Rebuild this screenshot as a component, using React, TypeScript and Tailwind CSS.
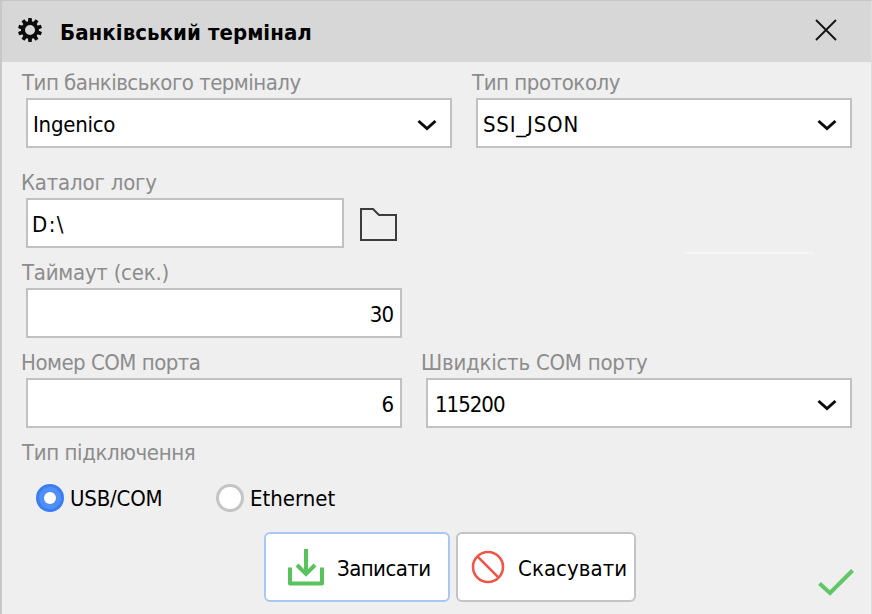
import React from "react";

type FieldProps = {
  label: string;
  value: string;
  labelClass: string;
  valueClass: string;
  boxClass: string;
  select?: boolean;
  numeric?: boolean;
};

function Chevron() {
  return (
    <svg className="mt-1.5 mr-[13px] shrink-0" width="20" height="14" viewBox="0 0 20 14" fill="none">
      <path d="M1.5 2 L10 9.5 L18.5 2" stroke="#0c0c0c" strokeWidth="3" />
    </svg>
  );
}

function Field({ label, value, labelClass, valueClass, boxClass, select, numeric }: FieldProps) {
  return (
    <div>
      <div className={`h-9 whitespace-nowrap pt-[3px] leading-9 text-[#8c8c8c] ${labelClass}`}>{label}</div>
      <div
        className={`ml-1 flex h-[50px] items-center border-2 border-[#c1c1c1] bg-white ${
          numeric ? "justify-end" : "justify-between"
        } ${boxClass}`}
      >
        <span className={`whitespace-nowrap pt-1 ${valueClass}`}>{value}</span>
        {select && <Chevron />}
      </div>
    </div>
  );
}

function Radio({ label, checked, labelClass }: { label: string; checked?: boolean; labelClass: string }) {
  return (
    <div className="flex w-[180px] items-center">
      <span
        className={`flex h-7 w-7 shrink-0 items-center justify-center rounded-full border-[3px] ${
          checked ? "border-[#3b7df5] bg-[#5090f5]" : "border-[#c4c4c4] bg-white"
        }`}
      >
        {checked && <span className="h-3 w-3 rounded-full bg-white" />}
      </span>
      <span className={`ml-[6px] whitespace-nowrap pt-px ${labelClass}`}>{label}</span>
    </div>
  );
}

export default function App() {
  return (
    <div className="flex h-[614px] w-[872px] flex-col overflow-hidden border-l-2 border-r border-t border-l-[#c8c8c8] border-r-[#dedede] border-t-[#c6c6c6] bg-[#efefef] font-['DejaVu_Sans_Condensed','DejaVu_Sans',sans-serif] text-[22px] leading-[26px] text-black">
      <header className="flex h-[61px] shrink-0 items-center bg-[#d7d7d7]">
        <svg className="mb-[3px] ml-4 shrink-0" width="24" height="24" viewBox="-12 -12 24 24">
          <circle r="7" fill="none" stroke="#0b0b0b" strokeWidth="4" />
          {[0, 36, 72, 108, 144, 180, 216, 252, 288, 324].map((a) => (
            <path key={a} d="M-2 -8 L-1.7 -12 L1.7 -12 L2 -8 Z" fill="#0b0b0b" transform={`rotate(${a})`} />
          ))}
        </svg>
        <h1 className="ml-[18px] whitespace-nowrap pt-0.5 font-bold tracking-[0.06px]">Банківський термінал</h1>
        <svg className="mb-[3px] ml-auto mr-[34px]" width="22" height="22" viewBox="0 0 22 22">
          <path d="M1 1 L21 21 M21 1 L1 21" stroke="#151515" strokeWidth="1.9" />
        </svg>
      </header>

      <main className="pl-5">
        <div className="flex gap-5">
          <Field label="Тип банківського терміналу" value="Ingenico" select labelClass="tracking-[-0.52px]" valueClass="pl-[5px] tracking-[-0.25px]" boxClass="w-[426px]" />
          <Field label="Тип протоколу" value="SSI_JSON" select labelClass="tracking-[-0.45px]" valueClass="pl-[5px] tracking-[0.8px]" boxClass="w-[376px]" />
        </div>
        <div className="mt-[14px] flex items-end">
          <Field label="Каталог логу" value={"D:\\"} labelClass="-ml-px tracking-[-0.2px]" valueClass="pl-1 tracking-[1.4px]" boxClass="w-[318px]" />
          <svg className="mb-[6px] ml-4" width="38" height="34" viewBox="0 0 38 34" fill="none">
            <path d="M1 1 H13 L19 7 H36 V32 H1 Z" stroke="#3d3d3d" strokeWidth="2" />
          </svg>
        </div>
        <div className="flex">
          <div className="mt-1">
            <Field label="Таймаут (сек.)" value="30" numeric labelClass="tracking-[-0.25px]" valueClass="pr-[7px] tracking-[-1px]" boxClass="w-[376px]" />
          </div>
          <div className="ml-[283px] mt-1 h-[2px] w-[129px] bg-[#f5f5f5]" />
        </div>
        <div className="mt-1 flex gap-5">
          <Field label="Номер COM порта" value="6" numeric labelClass="-ml-px tracking-[-0.5px]" valueClass="pr-[7px] tracking-[-1px]" boxClass="w-[376px]" />
          <Field label="Швидкість COM порту" value="115200" select labelClass="-ml-px tracking-[-0.23px]" valueClass="pl-[7px] tracking-[-1px]" boxClass="w-[426px]" />
        </div>
        <div className="mt-1 h-9 whitespace-nowrap pt-[3px] leading-9 tracking-[-0.4px] text-[#8c8c8c]">Тип підключення</div>
        <div className="flex h-[60px] items-center pl-[14px]">
          <Radio label="USB/COM" checked labelClass="tracking-[-0.2px]" />
          <Radio label="Ethernet" labelClass="tracking-[0px]" />
        </div>
      </main>

      <footer className="mt-1 flex items-start pl-[262px]">
        <button className="flex h-[70px] w-[186px] items-center rounded-[6px] border-2 border-[#a6c8f2] bg-white">
          <svg className="ml-[22px] mt-[1px] shrink-0" width="36" height="37" viewBox="0 0 36 37" fill="none" stroke="#58c25c" strokeWidth="4">
            <path d="M2 18.500 V34.500 H34 V18.500" strokeLinejoin="round" />
            <path d="M18 0 V25 M9 16 L18 25 L27 16" />
          </svg>
          <span className="ml-[13px] whitespace-nowrap pt-1 tracking-[-0.55px]">Записати</span>
        </button>
        <button className="ml-[6px] flex h-[70px] w-[180px] items-center rounded-[6px] border-2 border-[#c4c4c4] bg-white">
          <svg className="ml-[13px] shrink-0" width="34" height="34" viewBox="0 0 34 34" fill="none" stroke="#f05548" strokeWidth="2.6">
            <circle cx="17" cy="17" r="15" />
            <path d="M6.400 6.400 L27.600 27.600" />
          </svg>
          <span className="ml-[13px] whitespace-nowrap pt-1 tracking-[0.05px]">Скасувати</span>
        </button>
        <svg className="ml-auto mr-[16px] mt-[36px]" width="38" height="30" viewBox="0 0 38 30" fill="none">
          <path d="M2.500 15.500 L13 25 L35.500 2.500" stroke="#5fc767" strokeWidth="4" />
        </svg>
      </footer>
    </div>
  );
}
